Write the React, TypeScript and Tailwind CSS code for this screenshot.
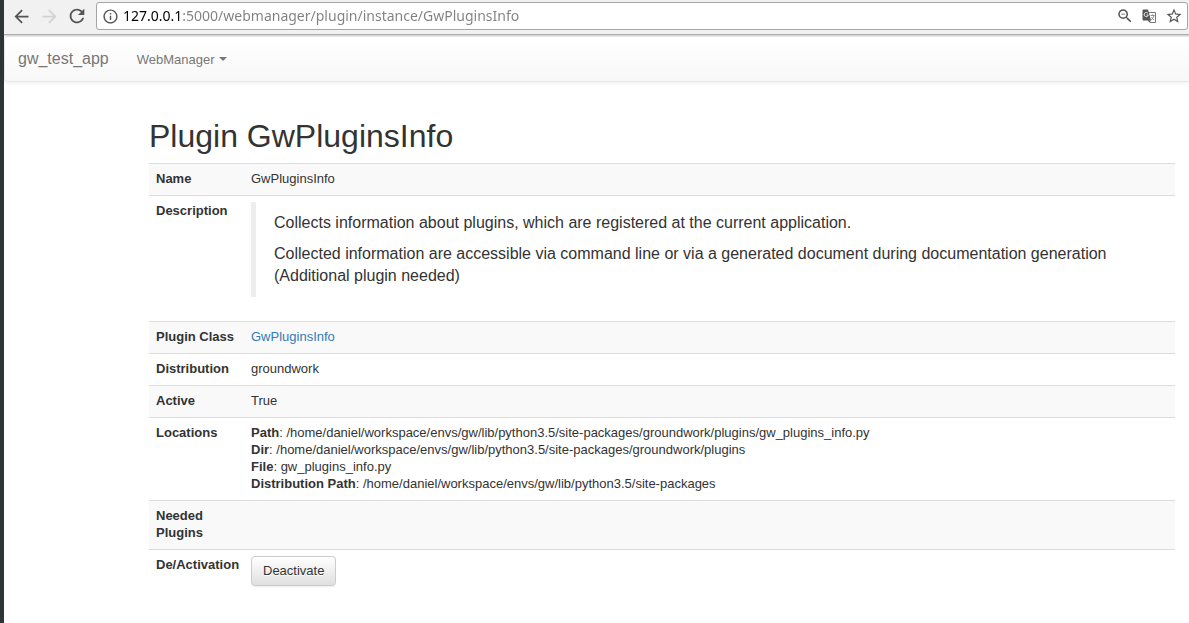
import type { ReactNode } from "react";
import {
  MdArrowBack,
  MdArrowForward,
  MdInfoOutline,
  MdRefresh,
  MdStarBorder,
  MdZoomOut,
} from "react-icons/md";

function TranslateIcon() {
  return (
    <svg width="15" height="15" viewBox="0 0 15 15" aria-hidden="true">
      <path d="M6 3.5h7.5v10H8L6 11z" fill="#fff" stroke="#777" />
      <path d="M8.5 6.5h4M10.5 5.5v1M12 6.5c-.5 2-1.7 3.5-3 4.5M9.5 8c.6 1.3 1.5 2.3 2.5 3" fill="none" stroke="#8a8a8a" />
      <path d="M1.5 .5H6l.6 2 2.4 9H1.5a1 1 0 0 1-1-1v-9a1 1 0 0 1 1-1z" fill="#555" />
      <path d="M6 4.4A2.1 2.1 0 1 0 6.3 6H4.5" fill="none" stroke="#eee" />
      <path d="M6 11.5h3l-1.5 2z" fill="#555" />
    </svg>
  );
}

function BrowserBar() {
  return (
    <header className="flex h-9 items-start gap-2 border-b border-[#d8d8d8] bg-[#f1f1f1] pr-px pl-1.5 shadow-[inset_0_-1px_0_#b0b0b0]">
      <div className="flex h-8 items-center gap-1.5 text-[#555]">
        <button aria-label="Back" className="flex w-5.5 justify-center">
          <MdArrowBack size={21} />
        </button>
        <button aria-label="Forward" disabled className="flex w-5.5 justify-center text-[#d2d2d2]">
          <MdArrowForward size={21} />
        </button>
        <button aria-label="Reload" className="flex w-5.5 justify-center">
          <MdRefresh size={22} />
        </button>
      </div>
      <div className="mt-0.5 flex h-7 flex-1 items-center rounded-[3px] border border-[#a5a5a5] bg-white pr-1 pl-[5px] text-[#555]">
        <button aria-label="Site information">
          <MdInfoOutline size={17} />
        </button>
        <input
          aria-label="Address"
          defaultValue="127.0.0.1:5000/webmanager/plugin/instance/GwPluginsInfo"
          className="ml-1 min-w-0 flex-1 bg-[linear-gradient(to_right,#000_60px,#808080_60px)] bg-clip-text font-['Noto_Sans',sans-serif] text-sm text-transparent caret-black outline-none"
        />
        <div className="flex items-center gap-2">
          <button aria-label="Zoom">
            <MdZoomOut size={18} />
          </button>
          <button aria-label="Translate this page">
            <TranslateIcon />
          </button>
          <button aria-label="Bookmark this page">
            <MdStarBorder size={18} />
          </button>
        </div>
      </div>
    </header>
  );
}

function NavBar() {
  return (
    <nav className="flex h-[46px] items-center gap-7 rounded-l border border-r-0 border-[#e7e7e7] bg-linear-to-b from-white to-[#f8f8f8] px-[13px] text-[#777] shadow-[0_1px_4px_rgba(0,0,0,0.075)]">
      <a href="#home" className="text-base">
        gw_test_app
      </a>
      <button className="flex items-center gap-1">
        WebManager
        <span className="border-x-4 border-t-4 border-x-transparent border-t-[#777]" />
      </button>
    </nav>
  );
}

function Row({ label, children }: { label: string; children?: ReactNode }) {
  return (
    <tr className="border-t border-[#ddd] odd:bg-[#f9f9f9]">
      <th scope="row" className="px-[7px] pt-1.5 pb-2 text-left align-top font-bold">
        {label}
      </th>
      <td className="px-[7px] pt-1.5 pb-2 align-top">{children}</td>
    </tr>
  );
}

const locations = [
  ["Path", "/home/daniel/workspace/envs/gw/lib/python3.5/site-packages/groundwork/plugins/gw_plugins_info.py"],
  ["Dir", "/home/daniel/workspace/envs/gw/lib/python3.5/site-packages/groundwork/plugins"],
  ["File", "gw_plugins_info.py"],
  ["Distribution Path", "/home/daniel/workspace/envs/gw/lib/python3.5/site-packages"],
];

export default function App() {
  return (
    <div className="min-h-screen border-l-4 border-[#2f3437] bg-white font-['Liberation_Sans',Arial,sans-serif] text-[13px] leading-[17px] text-[#333]">
      <BrowserBar />
      <NavBar />
      <main className="pt-9 pr-3.5 pb-9 pl-[145px]">
        <h1 className="mb-[9px] text-[32px] leading-9">Plugin GwPluginsInfo</h1>
        <table className="w-full table-fixed border-collapse">
          <colgroup>
            <col className="w-[95px]" />
            <col />
          </colgroup>
          <tbody>
            <Row label="Name">GwPluginsInfo</Row>
            <Row label="Description">
              <blockquote className="mb-4 flex flex-col gap-[9px] border-l-[5px] border-[#eee] px-[18px] py-2.5 text-base leading-[22px]">
                <p>Collects information about plugins, which are registered at the current application.</p>
                <p>
                  Collected information are accessible via command line or via a generated document during
                  documentation generation (Additional plugin needed)
                </p>
              </blockquote>
            </Row>
            <Row label="Plugin Class">
              <a href="#GwPluginsInfo" className="text-[#337ab7]">
                GwPluginsInfo
              </a>
            </Row>
            <Row label="Distribution">groundwork</Row>
            <Row label="Active">True</Row>
            <Row label="Locations">
              {locations.map(([name, value]) => (
                <div key={name}>
                  <b>{name}</b>: {value}
                </div>
              ))}
            </Row>
            <Row label="Needed Plugins" />
            <Row label="De/Activation">
              <button className="block rounded border border-[#ccc] bg-linear-to-b from-white to-[#e0e0e0] px-[11px] pt-[5px] pb-1.5 shadow-[0_1px_1px_rgba(0,0,0,0.075)] [text-shadow:0_1px_0_#fff]">
                Deactivate
              </button>
            </Row>
          </tbody>
        </table>
      </main>
    </div>
  );
}
